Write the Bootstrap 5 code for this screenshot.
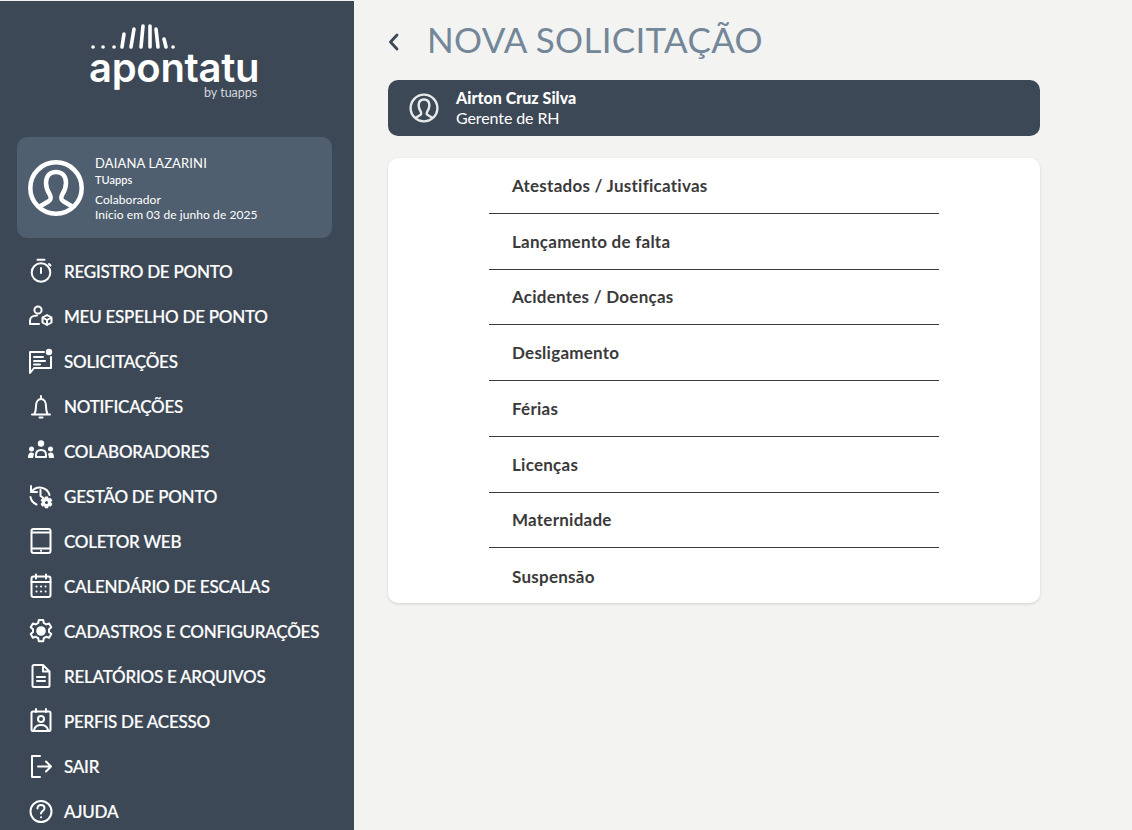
<!DOCTYPE html>
<html lang="pt-BR">
<head>
<meta charset="utf-8">
<title>Nova Solicitação</title>
<link href="https://cdn.jsdelivr.net/npm/bootstrap@5.3.0/dist/css/bootstrap.min.css" rel="stylesheet">
<style>
html,body{height:100%;}
body{background:#f3f3f2;font-family:"Lato","Liberation Sans",sans-serif;overflow:hidden;}
.app-shell{height:830px;padding-top:1px;}
.side-panel{width:354px;height:829px;background:#3c4855;color:#fff;overflow:hidden;flex:none;}
.logo-box{height:136px;padding-top:22px;}
.logo-bars{display:block;margin-left:91px;}
.logo-word{font-family:"Inter","Liberation Sans",sans-serif;font-size:40px;font-weight:600;line-height:34px;letter-spacing:-.3px;margin-left:89px;margin-top:1px;color:#fff;}
.logo-by{font-family:"Lato",sans-serif;font-size:12.500px;line-height:14px;margin-left:204px;color:#d5d8dc;margin-top:1px;font-weight:400;}
.user-box{margin:0 22px 0 17px;height:101px;background:#505f70;border-radius:10px;padding-left:11px;}
.user-text{font-size:12px;line-height:15px;margin-left:11px;padding-top:1px;letter-spacing:.07px;}
.user-name{font-size:13px;line-height:16px;margin-bottom:1px;letter-spacing:.13px;}
.user-org{font-size:11px;font-weight:500;line-height:15px;margin-bottom:5px;}
.side-nav{margin-top:12px;}
.side-link{height:45px;color:#fff;font-size:17px;font-weight:500;text-decoration:none;line-height:44px;letter-spacing:-.24px;white-space:nowrap;-webkit-text-stroke:.2px #fff;}
.side-link:hover{color:#fff;}
.nav-ico{width:64px;flex:none;display:flex;justify-content:center;padding-left:18px;}
.nav-ico svg{fill:none;stroke:#fff;stroke-width:2;stroke-linecap:round;stroke-linejoin:round;margin-top:-1px;}
.main-panel{padding:0 92px 0 34px;flex:1;}
.title-row{height:79px;}
.back-btn{width:40px;color:#3c4855;margin-top:-1px;}
.page-title{font-size:35px;font-weight:400;color:#748799;margin:-2px 0 0 -1px;line-height:79px;letter-spacing:.3px;}
.person-bar{height:56px;background:#3c4855;border-radius:10px;color:#fff;padding-left:21px;}
.person-text{margin-left:17px;font-size:16px;line-height:20px;}
.person-name{font-weight:900;letter-spacing:.02px;}
.person-role{letter-spacing:-.1px;}
.option-card{margin-top:22px;background:#fff;border-radius:10px;border:0;box-shadow:0 1px 3px rgba(0,0,0,.14);padding-left:101px;height:445px;}
.option-item{width:450px;height:55.75px;padding:.5px 0 0 23px;color:#3a3a3a;font-size:17px;font-weight:700;letter-spacing:.25px;background:transparent;border:0;border-bottom:1px solid #3a3a3a;border-radius:0;display:flex;align-items:center;}
.option-item:last-child{border-bottom:0;}
</style>
</head>
<body>
<div class="app-shell d-flex">
  <aside class="side-panel">
    <div class="logo-box">
      <svg class="logo-bars" width="86" height="27" viewBox="0 0 86 27" fill="none" stroke="#fff" stroke-width="3.600" stroke-linecap="round">
        <path d="M2 24h.1M12 24h.1M23 24h.1M31 24 33 11M40 24 43 6M50 24 52 3M59 24 59 3M67 24 65 6M75 24 73 16M82 24h.1"/>
      </svg>
      <div class="logo-word">apontatu</div>
      <div class="logo-by">by tuapps</div>
    </div>
    <div class="user-box d-flex align-items-center">
      <svg width="56" height="56" viewBox="0 0 56 56" fill="none" stroke="#fff" stroke-width="4.500"><circle cx="28" cy="28" r="25.700"/><path d="M11 47 21 41c2-1 2-4 1-6-2-3-4-7-4-12 0-7 4-11 10-11s10 4 10 11c0 5-2 9-4 12-1 2-1 5 1 6l10 6"/></svg>
      <div class="user-text">
        <div class="user-name">DAIANA LAZARINI</div>
        <div class="user-org">TUapps</div>
        <div>Colaborador</div>
        <div>Início em 03 de junho de 2025</div>
      </div>
    </div>
    <nav class="side-nav nav flex-column">
      <a class="side-link d-flex" href="#"><span class="nav-ico"><svg width="24" height="45" viewBox="0 -10 24 45"><circle cx="12" cy="13.500" r="9.300"/><path d="M8.500 .8h7M12 9v5M20 5l1.500 1.500"/></svg></span>REGISTRO DE PONTO</a>
      <a class="side-link d-flex" href="#"><span class="nav-ico"><svg width="26" height="45" viewBox="0 -10 26 45"><circle cx="10" cy="6" r="3.600"/><path d="M2 16.500c0-3 3-5 7-5M2 20h9M2 16.500V20"/><path d="M19 11l4.500 2.500v5L19 21l-4.500-2.500v-5zM14.500 13.500 19 16l4.500-2.500M19 16v5"/></svg></span>MEU ESPELHO DE PONTO</a>
      <a class="side-link d-flex" href="#"><span class="nav-ico"><svg width="24" height="45" viewBox="0 -10 24 45"><path d="M15 3H1v21l4-5h17V8"/><path d="M5 8h9M5 12h11M5 15.500h6"/><circle cx="20" cy="3" r="3.200" fill="#fff" stroke="none"/></svg></span>SOLICITAÇÕES</a>
      <a class="side-link d-flex" href="#"><span class="nav-ico"><svg width="24" height="45" viewBox="0 -10 24 45"><path d="M3 20.500h18M5.500 20c1-2 1.500-4 1.500-8s2-7 5-7 5 3 5 7 .5 6 1.500 8M12 2v2M10.500 23.500h3"/></svg></span>NOTIFICAÇÕES</a>
      <a class="side-link d-flex" href="#"><span class="nav-ico"><svg width="28" height="45" viewBox="0 -10 28 45"><g fill="#fff" stroke="none"><circle cx="14" cy="4.500" r="3.200"/><circle cx="4.500" cy="10" r="2.500"/><circle cx="23.500" cy="10" r="2.500"/><path d="M1 19c0-4 1-5.500 3.500-5.500L7 14.500 6 19zM27 19c0-4-1-5.500-3.500-5.500L21 14.500l1 4.500z"/></g><path d="M9 18v-2c0-3 2-5 5-5s5 2 5 5v2z"/></svg></span>COLABORADORES</a>
      <a class="side-link d-flex" href="#"><span class="nav-ico"><svg width="26" height="45" viewBox="0 -10 26 45"><path d="M3 2v6h6M3.500 8A10 10 0 0 1 21.500 11M12.500 6v6l3 2M2.500 13c.500 3 2.500 6 6 7.500"/><g transform="translate(12.500 12.500) scale(.5)" stroke-width="2.500"><path d="M9.800 1h4.400l.6 3 2.400 1.400 2.900-1 2.200 3.800-2.300 2 0 2.800 2.300 2-2.200 3.800-2.900-1-2.400 1.400-.6 3H9.800l-.6-3-2.400-1.400-2.900 1-2.200-3.800 2.300-2V10.200l-2.300-2 2.200-3.800 2.900 1 2.400-1.400z" fill="#fff"/><circle cx="12" cy="12" r="3" fill="#3c4855" stroke="none"/></g></svg></span>GESTÃO DE PONTO</a>
      <a class="side-link d-flex" href="#"><span class="nav-ico"><svg width="22" height="45" viewBox="0 -10 22 45"><rect x="1.500" y="0" width="19" height="24" rx="2"/><path d="M2 3.500h18M2 19.500h18M11 21.700h.1"/></svg></span>COLETOR WEB</a>
      <a class="side-link d-flex" href="#"><span class="nav-ico"><svg width="22" height="45" viewBox="0 -10 22 45"><rect x="1.500" y="2.500" width="19" height="20.500" rx="2"/><path d="M1.500 8h19M6 .5v4M16 .5v4M6.500 12.500h.1M11 12.500h.1M15.500 12.500h.1M6.500 17.500h.1M11 17.500h.1M15.500 17.500h.1"/></svg></span>CALENDÁRIO DE ESCALAS</a>
      <a class="side-link d-flex" href="#"><span class="nav-ico"><svg width="24" height="45" viewBox="0 -10 24 45"><path d="M9.800 1h4.400l.6 3 2.400 1.400 2.900-1 2.200 3.800-2.300 2 0 2.800 2.300 2-2.200 3.800-2.900-1-2.400 1.400-.6 3H9.800l-.6-3-2.400-1.400-2.900 1-2.200-3.800 2.300-2V10.200l-2.300-2 2.200-3.800 2.900 1 2.400-1.400z"/><circle cx="12" cy="12" r="3.800" fill="#fff"/></svg></span>CADASTROS E CONFIGURAÇÕES</a>
      <a class="side-link d-flex" href="#"><span class="nav-ico"><svg width="20" height="45" viewBox="0 -10 20 45"><path d="M12 1H3a1.500 1.500 0 0 0-1.500 1.500v19A1.500 1.500 0 0 0 3 23h14a1.500 1.500 0 0 0 1.500-1.500V7.500zM12 1v6.500h6.500M6 13h8M6 17h8"/></svg></span>RELATÓRIOS E ARQUIVOS</a>
      <a class="side-link d-flex" href="#"><span class="nav-ico"><svg width="22" height="45" viewBox="0 -10 22 45"><rect x="1.500" y="2.500" width="19" height="19.500" rx="1.500"/><path d="M6 0v3M16 0v3"/><circle cx="11" cy="10" r="3"/><path d="M4 21c1-4 4-5 7-5s6 1 7 5"/></svg></span>PERFIS DE ACESSO</a>
      <a class="side-link d-flex" href="#"><span class="nav-ico"><svg width="22" height="45" viewBox="0 -10 22 45"><path d="M10 2H2v21h8M8 12.500h13M16 7.500l5 5-5 5"/></svg></span>SAIR</a>
      <a class="side-link d-flex" href="#"><span class="nav-ico"><svg width="24" height="45" viewBox="0 -10 24 45"><circle cx="12" cy="12.500" r="10.500"/><path d="M8.500 9.500C8.500 7 10 6 12 6s3.500 1.300 3.500 3.200c0 2.800-3.500 2.800-3.500 5.300M12 18.300h.1"/></svg></span>AJUDA</a>
    </nav>
  </aside>
  <main class="main-panel">
    <div class="title-row d-flex align-items-center">
      <span class="back-btn"><svg width="12" height="18" viewBox="0 0 12 18" fill="none" stroke="#3c4855" stroke-width="2.800" stroke-linecap="round" stroke-linejoin="round"><path d="M9 2 2.500 9 9 16"/></svg></span>
      <h1 class="page-title">NOVA SOLICITAÇÃO</h1>
    </div>
    <div class="person-bar d-flex align-items-center">
      <svg width="30" height="30" viewBox="0 0 56 56" fill="none" stroke="#e6e8ea" stroke-width="4.500"><circle cx="28" cy="28" r="25"/><path d="M11 47 21 41c2-1 2-4 1-6-2-3-4-7-4-12 0-7 4-11 10-11s10 4 10 11c0 5-2 9-4 12-1 2-1 5 1 6l10 6"/></svg>
      <div class="person-text">
        <div class="person-name">Airton Cruz Silva</div>
        <div class="person-role">Gerente de RH</div>
      </div>
    </div>
    <div class="card option-card">
      <div class="list-group list-group-flush">
        <a class="list-group-item option-item" href="#">Atestados / Justificativas</a>
        <a class="list-group-item option-item" href="#">Lançamento de falta</a>
        <a class="list-group-item option-item" href="#">Acidentes / Doenças</a>
        <a class="list-group-item option-item" href="#">Desligamento</a>
        <a class="list-group-item option-item" href="#">Férias</a>
        <a class="list-group-item option-item" href="#">Licenças</a>
        <a class="list-group-item option-item" href="#">Maternidade</a>
        <a class="list-group-item option-item" href="#">Suspensão</a>
      </div>
    </div>
  </main>
</div>
</body>
</html>
